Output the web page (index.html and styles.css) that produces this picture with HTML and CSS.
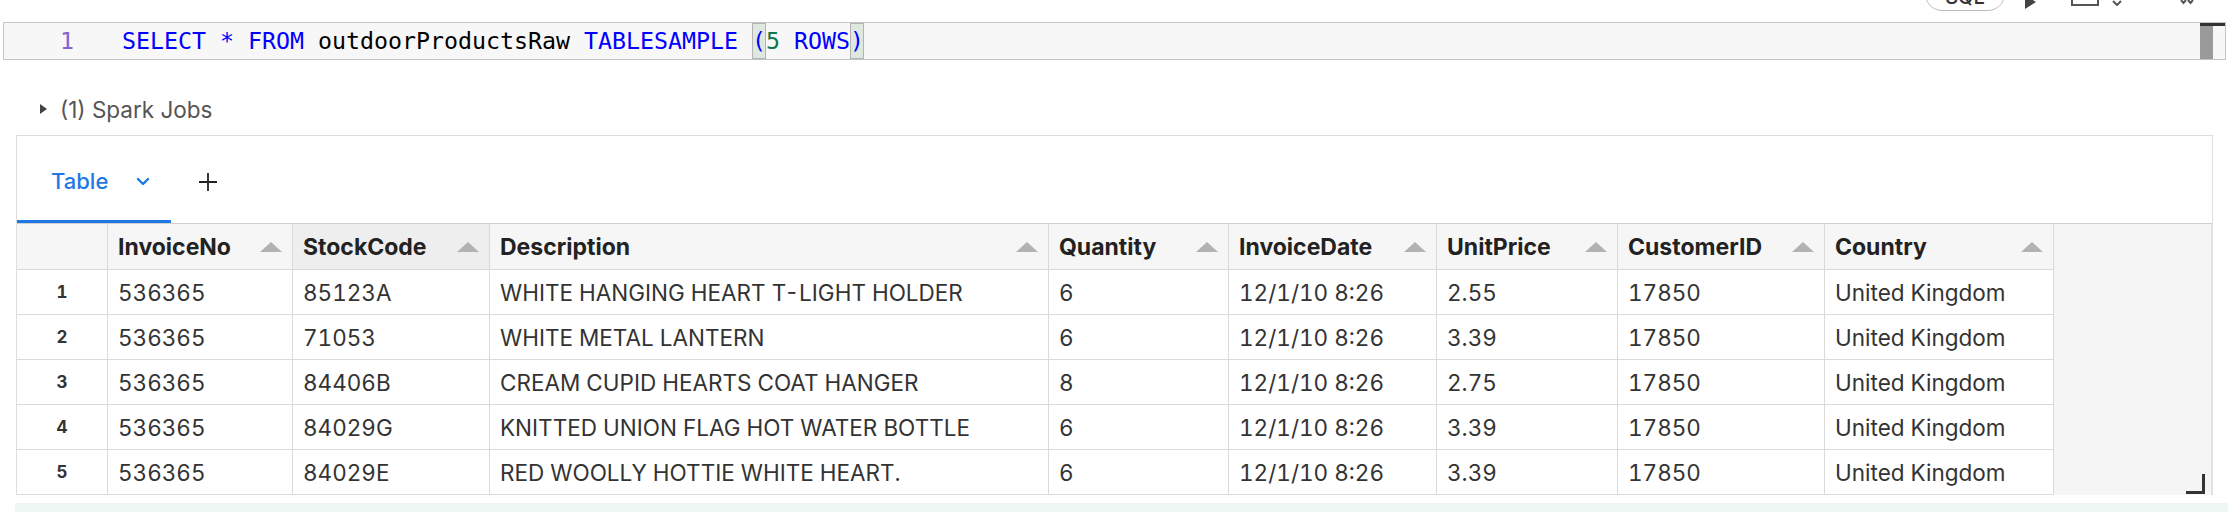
FILE: index.html
```html
<!DOCTYPE html>
<html lang="en">
<head>
<meta charset="utf-8">
<title>Notebook cell</title>
<link rel="stylesheet" href="styles.css">
</head>
<body>
<div class="toolbar">
  <div class="pill">SQL</div>
  <div class="tb-play"></div>
  <div class="tb-chart"></div>
  <div class="tb-chev"><svg width="10" height="6" viewBox="0 0 10 6"><path d="M1 1 L5 5 L9 1" fill="none" stroke="#555" stroke-width="2"/></svg></div>
  <div class="tb-collapse"><svg width="14" height="6" viewBox="0 0 14 6"><path d="M1 1 L3.5 4 L6 1 M8 1 L10.5 4 L13 1" fill="none" stroke="#555" stroke-width="2"/></svg></div>
</div>

<div class="editor">
  <div class="gutter">1</div>
  <div class="code"><span class="kw">SELECT</span> <span class="kw">*</span> <span class="kw">FROM</span> outdoorProductsRaw <span class="kw">TABLESAMPLE</span> <span class="br kw">(</span><span class="num">5</span> <span class="kw">ROWS</span><span class="br kw">)</span></div>
  <div class="vscroll"><div class="thumb"></div></div>
</div>

<div class="jobs"><span class="caret"></span><span>(1) Spark Jobs</span></div>

<div class="result">
  <div class="tabs">
    <div class="tab active">
      <span class="tab-label">Table</span>
      <svg class="tab-chev" width="14" height="9" viewBox="0 0 14 9"><path d="M2 2 L7 7 L12 2" fill="none" stroke="#1f78e6" stroke-width="2.4" stroke-linecap="round" stroke-linejoin="round"/></svg>
    </div>
    <svg class="tab-plus" width="20" height="20" viewBox="0 0 20 20"><path d="M10 1 V19 M1 10 H19" stroke="#222" stroke-width="1.8"/></svg>
  </div>
  <div class="grid">
    <table class="data">
      <thead>
        <tr>
          <th class="c-idx"></th>
          <th class="c-inv"><div class="hd"><span>InvoiceNo</span><i class="sort"></i></div></th>
          <th class="c-stock hover"><div class="hd"><span>StockCode</span><i class="sort"></i></div></th>
          <th class="c-desc"><div class="hd"><span>Description</span><i class="sort"></i></div></th>
          <th class="c-qty"><div class="hd"><span>Quantity</span><i class="sort"></i></div></th>
          <th class="c-date"><div class="hd"><span>InvoiceDate</span><i class="sort"></i></div></th>
          <th class="c-price"><div class="hd"><span>UnitPrice</span><i class="sort"></i></div></th>
          <th class="c-cust"><div class="hd"><span>CustomerID</span><i class="sort"></i></div></th>
          <th class="c-country"><div class="hd"><span>Country</span><i class="sort"></i></div></th>
        </tr>
      </thead>
      <tbody>
        <tr><td class="idx">1</td><td>536365</td><td>85123A</td><td>WHITE HANGING HEART T-LIGHT HOLDER</td><td>6</td><td>12/1/10 8:26</td><td>2.55</td><td>17850</td><td>United Kingdom</td></tr>
        <tr><td class="idx">2</td><td>536365</td><td>71053</td><td>WHITE METAL LANTERN</td><td>6</td><td>12/1/10 8:26</td><td>3.39</td><td>17850</td><td>United Kingdom</td></tr>
        <tr><td class="idx">3</td><td>536365</td><td>84406B</td><td>CREAM CUPID HEARTS COAT HANGER</td><td>8</td><td>12/1/10 8:26</td><td>2.75</td><td>17850</td><td>United Kingdom</td></tr>
        <tr><td class="idx">4</td><td>536365</td><td>84029G</td><td>KNITTED UNION FLAG HOT WATER BOTTLE</td><td>6</td><td>12/1/10 8:26</td><td>3.39</td><td>17850</td><td>United Kingdom</td></tr>
        <tr><td class="idx">5</td><td>536365</td><td>84029E</td><td>RED WOOLLY HOTTIE WHITE HEART.</td><td>6</td><td>12/1/10 8:26</td><td>3.39</td><td>17850</td><td>United Kingdom</td></tr>
      </tbody>
    </table>
    <div class="filler"></div>
    <div class="resize"></div>
  </div>
</div>

<div class="strip"></div>
</body>
</html>
```

FILE: styles.css
```css
* { box-sizing: border-box; }

html, body {
  margin: 0;
  padding: 0;
  background: #ffffff;
}

body {
  width: 2228px;
  height: 512px;
  overflow: hidden;
  font-family: Inter, "Noto Sans", "Liberation Sans", sans-serif;
  color: #333333;
}

/* ---------- top toolbar (cut off at top) ---------- */
.toolbar {
  height: 11px;
  display: flex;
  align-items: flex-end;
  padding-left: 1925px;
}

.pill {
  flex: none;
  width: 80px;
  height: 34px;
  border: 1px solid #bdbdbd;
  border-radius: 17px;
  display: flex;
  align-items: flex-end;
  justify-content: center;
  padding-bottom: 3px;
  font-size: 20px;
  line-height: 20px;
  color: #333;
  font-weight: 500;
}

.tb-play {
  flex: none;
  margin-left: 20px;
  margin-bottom: 2px;
  width: 0;
  height: 0;
  border-left: 11px solid #444;
  border-top: 7px solid transparent;
  border-bottom: 7px solid transparent;
}

.tb-chart {
  flex: none;
  margin-left: 35px;
  margin-bottom: 5px;
  width: 28px;
  height: 16px;
  border: 2px solid #555;
  border-top: none;
}

.tb-chev {
  flex: none;
  margin-left: 13px;
  margin-bottom: 5px;
  height: 6px;
  display: flex;
}

.tb-collapse {
  flex: none;
  margin-left: 58px;
  margin-bottom: 6px;
  height: 6px;
  display: flex;
}

/* ---------- code editor ---------- */
.editor {
  margin: 11px 2px 0 3px;
  height: 38px;
  border: 1px solid #c4c4c4;
  background: #f7f7f7;
  display: flex;
  font-family: "DejaVu Sans Mono", "Liberation Mono", monospace;
  font-size: 23.25px;
  line-height: 36px;
  white-space: pre;
}

.gutter {
  flex: none;
  width: 118px;
  padding-left: 56px;
  color: #8a5fcf;
}

.code {
  flex: 1;
  color: #000000;
}

.kw { color: #0000ff; }
.num { color: #0b7a46; }

.br {
  display: inline-block;
  height: 36px;
  vertical-align: top;
  background: #dfe8df;
  box-shadow: inset 0 0 0 1px #b3b3b3;
}

.vscroll {
  flex: none;
  width: 25px;
  border-top: 3px solid #333;
  display: flex;
}

.thumb {
  width: 13px;
  background: #9a9a9a;
}

/* ---------- spark jobs line ---------- */
.jobs {
  margin-top: 33px;
  height: 32px;
  padding-left: 40px;
  display: flex;
  align-items: center;
  font-size: 22.5px;
  color: #555555;
}

.caret {
  width: 0;
  height: 0;
  border-left: 7px solid #444;
  border-top: 5px solid transparent;
  border-bottom: 5px solid transparent;
  margin-right: 13px;
}

/* ---------- result panel ---------- */
.result {
  margin: 10px 15px 0 16px;
  border: 1px solid #dedede;
  border-bottom: none;
}

.tabs {
  height: 88px;
  border-bottom: 1px solid #cfcfcf;
  display: flex;
  align-items: flex-start;
}

.tab {
  height: 87px;
  width: 154px;
  padding: 6px 0 0 34px;
  display: flex;
  align-items: center;
  border-bottom: 3px solid #1f78e6;
}

.tab-label {
  font-size: 22px;
  color: #1f78e6;
  font-weight: 500;
}

.tab-chev {
  margin-left: 28px;
}

.tab-plus {
  margin-top: 36px;
  margin-left: 27px;
}

.grid {
  position: relative;
  display: flex;
  background: #f5f5f5;
}

.data {
  flex: none;
  width: 2037px;
  table-layout: fixed;
  border-collapse: separate;
  border-spacing: 0;
  background: #ffffff;
}

.data th, .data td {
  border-right: 1px solid #dadada;
  border-bottom: 1px solid #dadada;
  padding: 0 10px;
  text-align: left;
  white-space: nowrap;
  overflow: hidden;
}

.data th {
  height: 46px;
  background: #f6f6f6;
  font-size: 23px;
  font-weight: 700;
  color: #222222;
}

.data th.hover { background: #eeeeee; }

.data td {
  height: 45px;
  font-size: 22.5px;
  font-variant-numeric: tabular-nums;
  color: #333333;
}

.data td.idx {
  text-align: center;
  font-size: 17px;
  font-weight: 700;
  color: #333;
}

.hd {
  display: flex;
  align-items: center;
  justify-content: space-between;
}

.sort {
  width: 0;
  height: 0;
  border-left: 11px solid transparent;
  border-right: 11px solid transparent;
  border-bottom: 10px solid #b2b2b2;
}

.c-idx { width: 91px; }
.c-inv { width: 185px; }
.c-stock { width: 197px; }
.c-desc { width: 559px; }
.c-qty { width: 180px; }
.c-date { width: 208px; }
.c-price { width: 181px; }
.c-cust { width: 207px; }
.c-country { width: 229px; }

.filler {
  flex: 1;
  border-right: 1px solid #e4e4e4;
}

.resize {
  position: absolute;
  right: 7px;
  bottom: 1px;
  width: 19px;
  height: 20px;
  border-right: 3px solid #333;
  border-bottom: 3px solid #333;
}

.strip {
  margin: 8px 0 0 15px;
  height: 12px;
  background: #eef6f4;
}
```
